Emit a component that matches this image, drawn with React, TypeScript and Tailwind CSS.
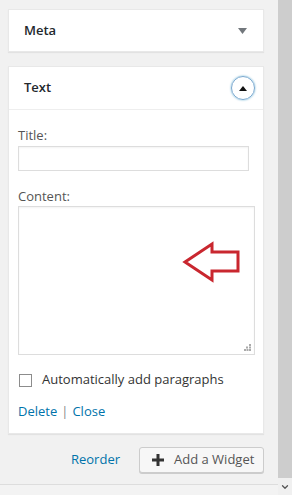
import { ChevronDown } from 'lucide-react';

export default function App() {
  return (
    <div className="flex w-[292px] h-[495px] overflow-hidden bg-[#f1f1f1] text-[13px] text-[#444]" style={{ fontFamily: '"Open Sans", "Liberation Sans", sans-serif' }}>
      {/* main column */}
      <div className="flex flex-col w-[278px]">
        <div className="flex-1 pt-[9px] pl-[8px] pr-[14px]">
          {/* Meta widget (closed) */}
          <div className="h-[43px] bg-white shadow-[0_1px_1px_rgba(0,0,0,0.06)] border border-[#e8e8e8] flex items-center justify-between pl-[15px] pr-[16px]">
            <span className="font-semibold text-[#23282d] text-[13px]">Meta</span>
            <svg width="9" height="6" viewBox="0 0 9 6"><polygon points="0,0 9,0 4.5,6" fill="#72777c" /></svg>
          </div>

          {/* Text widget (open) */}
          <div className="mt-[14px] bg-white shadow-[0_1px_1px_rgba(0,0,0,0.06)] border border-[#e8e8e8]">
            <div className="h-[43px] flex items-center justify-between pl-[15px] pr-[8px] border-b border-[#eee]">
              <span className="font-semibold text-[#23282d] text-[13px]">Text</span>
              <div className="w-[24px] h-[24px] rounded-full border border-[#7aa8cf] shadow-[0_0_2px_rgba(30,140,190,0.7)] flex items-center justify-center">
                <svg width="8" height="5" viewBox="0 0 8 5"><polygon points="4,0 8,5 0,5" fill="#111" /></svg>
              </div>
            </div>

            <div className="px-[9px] pt-[16px] pb-[13px]">
              <div className="leading-[18px] text-[#555]">Title:</div>
              <div className="mt-[2px] w-[231px] h-[25px] border border-[#ddd] shadow-[inset_0_1px_2px_rgba(0,0,0,0.05)]" />

              <div className="mt-[16px] leading-[18px] text-[#555]">Content:</div>
              <div className="relative mt-[1px] w-[237px] h-[149px] border border-[#ddd] shadow-[inset_0_1px_2px_rgba(0,0,0,0.05)]">
                <svg className="absolute left-0 top-0" width="237" height="149">
                  <polygon
                    points="166,55 193,37 193,45 219,45 219,64 193,64 193,73"
                    fill="none"
                    stroke="#c9272f"
                    strokeWidth="3"
                    strokeLinejoin="miter"
                  />
                </svg>
                {/* resize grip */}
                <svg className="absolute right-[3px] bottom-[3px]" width="7" height="7" viewBox="0 0 7 7">
                  <rect x="5" y="0" width="2" height="2" fill="#aaa" />
                  <rect x="2" y="2.5" width="2" height="2" fill="#aaa" />
                  <rect x="5" y="2.5" width="2" height="2" fill="#aaa" />
                  <rect x="0" y="5" width="2" height="2" fill="#aaa" />
                  <rect x="2.5" y="5" width="2" height="2" fill="#aaa" />
                  <rect x="5" y="5" width="2" height="2" fill="#aaa" />
                </svg>
              </div>

              <div className="mt-[16px] flex items-center h-[18px]">
                <div className="ml-[1px] w-[13px] h-[13px] border border-[#8c8c8c] bg-white" />
                <span className="ml-[10px] text-[#333]">Automatically add paragraphs</span>
              </div>

              <div className="mt-[13px] leading-[18px]">
                <a href="#" className="text-[#0073aa]">Delete</a>
                <span className="text-[#888] mx-[4px]">|</span>
                <a href="#" className="text-[#0073aa]">Close</a>
              </div>
            </div>
          </div>

          {/* actions */}
          <div className="mt-[13px] flex items-center justify-end gap-[19px]">
            <a href="#" className="text-[#0073aa] text-[13px]">Reorder</a>
            <button className="w-[125px] h-[26px] border border-[#ccc] bg-[#f7f7f7] rounded-[3px] shadow-[0_1px_0_#ccc] flex items-center pl-[12px] text-[#555] text-[13px]">
              <svg width="12" height="12" viewBox="0 0 12 12" className="mr-[10px]">
                <rect x="4.5" y="0" width="3" height="12" fill="#333" />
                <rect x="0" y="4.5" width="12" height="3" fill="#333" />
              </svg>
              Add a Widget
            </button>
          </div>
        </div>
        <div className="h-[11px] border-t border-[#ddd] bg-[#f3f3f3]" />
      </div>

      {/* scrollbar */}
      <div className="w-[14px] flex flex-col">
        <div className="h-[478px] bg-[#cdcdcd]" />
        <div className="flex-1 bg-[#f0f0f0] flex items-center justify-center">
          <ChevronDown size={10} strokeWidth={3} color="#555" />
        </div>
      </div>
    </div>
  );
}
